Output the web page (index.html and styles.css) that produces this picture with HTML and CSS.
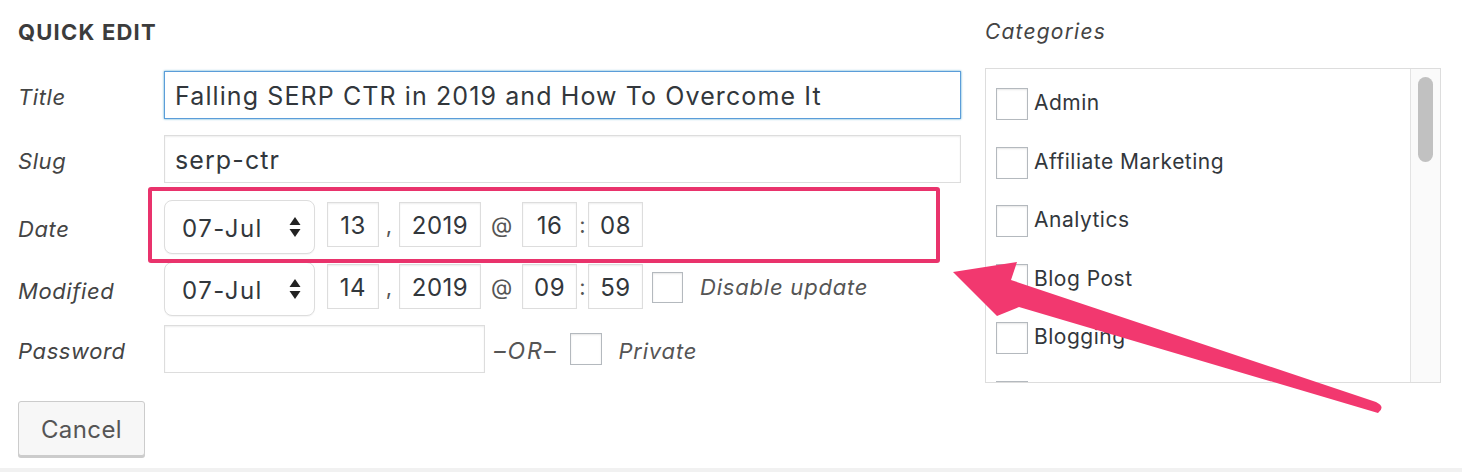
FILE: index.html
```html
<!DOCTYPE html>
<html lang="en">
<head>
<meta charset="utf-8">
<title>Quick Edit</title>
<link rel="stylesheet" href="styles.css">
</head>
<body>
<div class="page">
  <div class="main">
    <section class="edit-col">
      <h2 class="heading">QUICK EDIT</h2>
      <div class="row row-title">
        <span class="label">Title</span>
        <input class="text wide focus" type="text" value="Falling SERP CTR in 2019 and How To Overcome It">
      </div>
      <div class="row row-slug">
        <span class="label">Slug</span>
        <input class="text wide" type="text" value="serp-ctr">
      </div>
      <div class="row row-date">
        <span class="label">Date</span>
        <div class="fields">
          <div class="select"><span>07-Jul</span><svg class="updown" width="12" height="22" viewBox="0 0 12 22"><path d="M6 1 L11.5 9 H0.5 Z M6 21 L11.5 13 H0.5 Z" fill="#222"/></svg></div>
          <input class="text num day" type="text" value="13">
          <span class="sep comma">,</span>
          <input class="text num year" type="text" value="2019">
          <span class="sep at">@</span>
          <input class="text num hm" type="text" value="16">
          <span class="sep colon">:</span>
          <input class="text num hm min" type="text" value="08">
        </div>
      </div>
      <div class="row row-mod">
        <span class="label">Modified</span>
        <div class="fields">
          <div class="select"><span>07-Jul</span><svg class="updown" width="12" height="22" viewBox="0 0 12 22"><path d="M6 1 L11.5 9 H0.5 Z M6 21 L11.5 13 H0.5 Z" fill="#222"/></svg></div>
          <input class="text num day" type="text" value="14">
          <span class="sep comma">,</span>
          <input class="text num year" type="text" value="2019">
          <span class="sep at">@</span>
          <input class="text num hm" type="text" value="09">
          <span class="sep colon">:</span>
          <input class="text num hm min" type="text" value="59">
          <span class="check check-dis"></span>
          <span class="italic-note">Disable update</span>
        </div>
      </div>
      <div class="row row-pass">
        <span class="label">Password</span>
        <div class="fields">
          <input class="text pass" type="text" value="">
          <span class="italic-or">–OR–</span>
          <span class="check check-priv"></span>
          <span class="italic-note priv">Private</span>
        </div>
      </div>
      <div class="actions">
        <button class="btn" type="button">Cancel</button>
      </div>
    </section>
    <aside class="cat-col">
      <h3 class="cat-heading">Categories</h3>
      <div class="cat-box">
        <ul class="cat-list">
          <li><span class="check"></span><span>Admin</span></li>
          <li><span class="check"></span><span>Affiliate Marketing</span></li>
          <li><span class="check"></span><span>Analytics</span></li>
          <li><span class="check"></span><span>Blog Post</span></li>
          <li><span class="check"></span><span>Blogging</span></li>
          <li><span class="check"></span></li>
        </ul>
        <div class="track"><div class="thumb"></div></div>
      </div>
    </aside>
  </div>
  <div class="highlight"></div>
  <svg class="arrow" width="1462" height="472" viewBox="0 0 1462 472">
    <path d="M953 272 L1017 262 L1011 280 L1376 402 Q1386 407 1378 413 L1019 307 L997 316 Z" fill="#f2386f"/>
  </svg>
</div>
</body>
</html>
```

FILE: styles.css
```css
* { box-sizing: border-box; }
html, body { margin: 0; padding: 0; }
body {
  width: 1462px;
  height: 472px;
  background: #f1f1f1;
  font-family: Inter, "Noto Sans", sans-serif;
  color: #32373c;
  overflow: hidden;
}
.page {
  position: relative;
  height: 468px;
  background: #fff;
}
.main {
  display: flex;
  gap: 24px;
  padding-left: 18px;
}
.edit-col {
  width: 943px;
  display: flex;
  flex-direction: column;
}
.heading {
  margin: 0 0 27px;
  padding-top: 20px;
  height: 44px;
  line-height: 24px;
  font-size: 22px;
  font-weight: 700;
  color: #3c3c3c;
  letter-spacing: 1.2px;
}
.row {
  display: flex;
  align-items: center;
}
.label {
  width: 146px;
  flex: none;
  font-style: italic;
  font-size: 22px;
  letter-spacing: 0.6px;
  color: #444;
  padding-top: 4px;
}
.fields {
  display: flex;
  align-items: center;
}
.text {
  font-family: inherit;
  font-size: 24px;
  color: #32373c;
  border: 1px solid #ddd;
  box-shadow: inset 0 1px 2px rgba(0,0,0,0.07);
  background: #fff;
  outline: none;
  margin: 0;
}
.wide {
  width: 797px;
  height: 48px;
  padding: 2px 10px 0;
  font-size: 25px;
  letter-spacing: 1.1px;
}
.focus {
  border-color: #5b9dd9;
  box-shadow: 0 0 2px rgba(30,140,190,0.8);
}
.row-title { margin-bottom: 16px; }
.row-slug { margin-bottom: 17px; }
.row-date { height: 54px; margin-bottom: 8px; }
.row-mod { height: 54px; margin-bottom: 9px; }
.row-pass { height: 48px; margin-bottom: 28px; }

.select {
  width: 151px;
  height: 54px;
  border: 1px solid #ddd;
  border-radius: 8px;
  background: #fff;
  display: flex;
  align-items: center;
  justify-content: space-between;
  padding: 2px 13px 0 17px;
  font-size: 24px;
  letter-spacing: 1.5px;
  color: #32373c;
  box-shadow: 0 1px 1px rgba(0,0,0,0.04);
}
.updown { display: block; margin-top: -2px; }
.num {
  height: 45px;
  padding: 2px 0 0;
  text-align: center;
  letter-spacing: 0.5px;
  margin-top: -5px;
}
.day { width: 52px; margin-left: 12px; }
.year { width: 82px; }
.hm { width: 55px; }
.sep {
  font-size: 22px;
  color: #555;
  text-align: center;
  margin-top: -4px;
}
.comma { width: 20px; }
.at { width: 41px; }
.colon { width: 11px; }
.check {
  display: inline-block;
  width: 32px;
  height: 32px;
  border: 1px solid #b4b9be;
  background: #fff;
  box-shadow: inset 0 1px 2px rgba(0,0,0,0.1);
  flex: none;
}
.check-dis { margin-left: 9px; width: 31px; height: 31px; margin-top: -4px; }
.italic-note {
  font-style: italic;
  font-size: 22px;
  letter-spacing: 0.8px;
  color: #555;
  margin-left: 17px;
  padding-top: 0;
}
.row-mod .italic-note { margin-top: -4px; }
.pass {
  width: 321px;
  height: 48px;
}
.italic-or {
  font-style: italic;
  font-size: 23px;
  letter-spacing: 2px;
  color: #555;
  margin-left: 9px;
  padding-top: 4px;
}
.check-priv { margin-left: 13px; }
.priv { margin-left: 16px; padding-top: 4px; }
.actions { display: flex; }
.btn {
  font-family: inherit;
  width: 127px;
  height: 55px;
  font-size: 24px;
  letter-spacing: 0.4px;
  color: #555;
  background: #f7f7f7;
  border: 1px solid #ccc;
  border-radius: 3px;
  box-shadow: 0 2px 0 #ccc;
  padding: 2px 0 0;
}

.cat-col {
  width: 456px;
  display: flex;
  flex-direction: column;
}
.cat-heading {
  margin: 0 0 24px;
  padding-top: 20px;
  height: 44px;
  line-height: 24px;
  font-size: 21px;
  font-weight: 400;
  font-style: italic;
  letter-spacing: 1.2px;
  color: #444;
}
.cat-box {
  height: 315px;
  border: 1px solid #ddd;
  display: flex;
  overflow: hidden;
}
.cat-list {
  list-style: none;
  margin: 0;
  padding: 19px 0 0 10px;
  flex: 1;
}
.cat-list li {
  height: 58.5px;
  display: flex;
  align-items: flex-start;
  gap: 6px;
  font-size: 21px;
  letter-spacing: 0.5px;
  color: #32373c;
}
.cat-list li span:last-child { line-height: 30px; }
.track {
  width: 30px;
  border-left: 1px solid #e3e3e3;
  background: #fafafa;
  padding: 8px 0 0 7px;
}
.thumb {
  width: 15px;
  height: 85px;
  border-radius: 8px;
  background: #c1c1c1;
}

.highlight {
  position: absolute;
  left: 148px;
  top: 187px;
  width: 792px;
  height: 76px;
  border: 4px solid #e9336c;
  border-radius: 3px;
}
.arrow {
  position: absolute;
  left: 0;
  top: 0;
  pointer-events: none;
}
```
